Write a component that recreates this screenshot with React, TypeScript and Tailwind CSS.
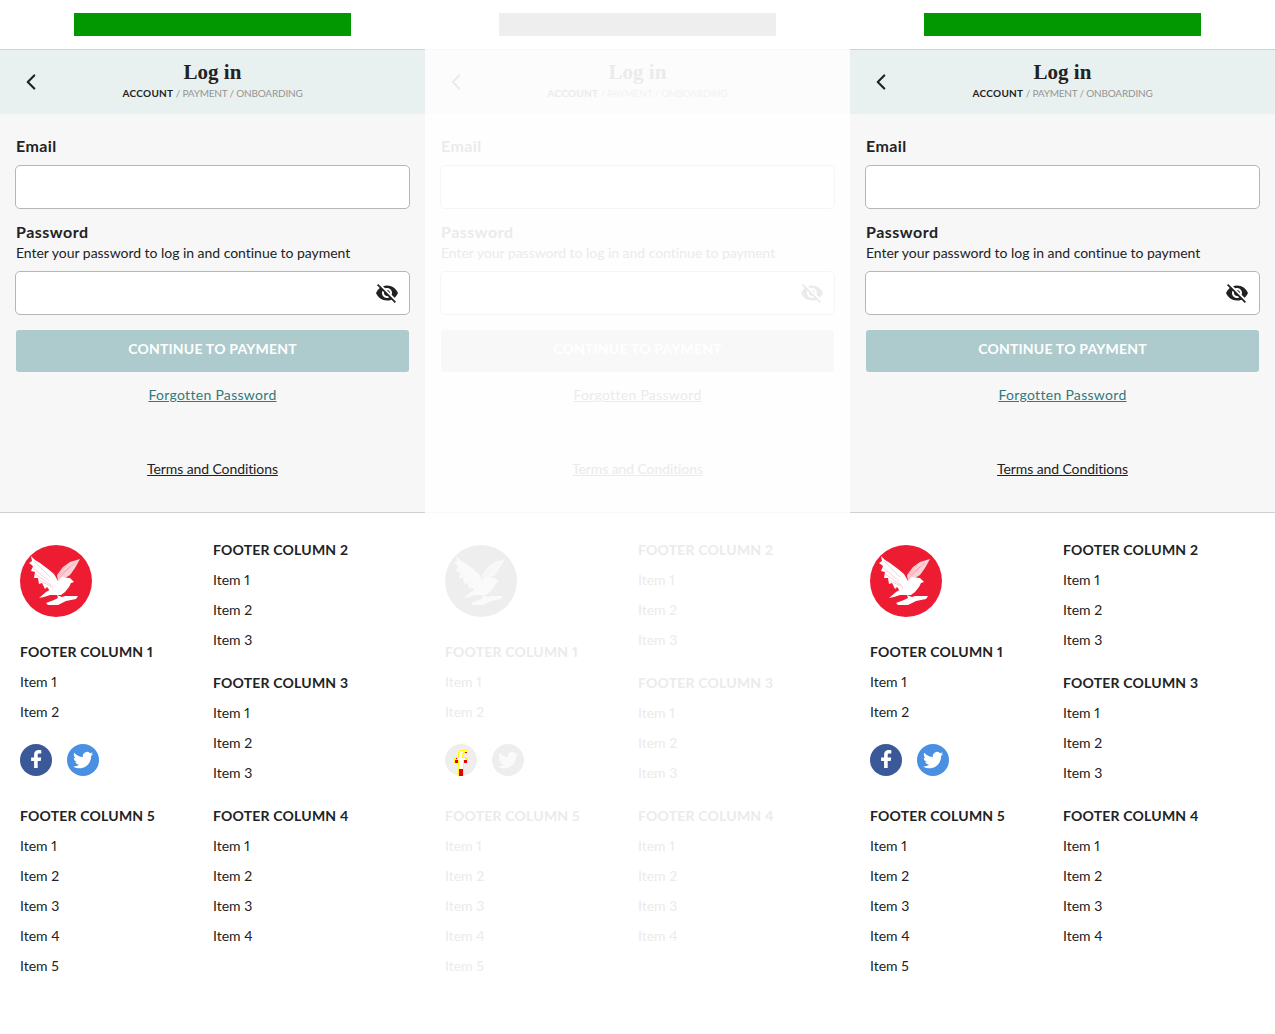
import { ChevronLeft } from "lucide-react";
import { MdVisibilityOff } from "react-icons/md";

type Theme = {
  page: string;
  ad: string;
  topBorder: string;
  header: string;
  title: string;
  crumbStrong: string;
  crumb: string;
  body: string;
  label: string;
  input: string;
  eye: string;
  button: string;
  buttonText: string;
  forgot: string;
  terms: string;
  bottomBorder: string;
  heading: string;
  item: string;
  logo: string;
  eagle: string;
  fb: string;
  tw: string;
};

const solid: Theme = {
  page: "bg-white",
  ad: "bg-[#029802]",
  topBorder: "border-[#d0d2d2]",
  header: "bg-[#e9f1f0]",
  title: "text-[#222222]",
  crumbStrong: "text-[#222222]",
  crumb: "text-[#949494]",
  body: "bg-[#f7f7f7]",
  label: "text-[#222222]",
  input: "border-[#b5b5b5] bg-white",
  eye: "text-[#222222]",
  button: "bg-[#adcbcc]",
  buttonText: "text-white",
  forgot: "text-[#2f7a7d]",
  terms: "text-[#222222]",
  bottomBorder: "border-[#d0d2d2]",
  heading: "text-[#222222]",
  item: "text-[#222222]",
  logo: "#ed1c33",
  eagle: "#ffffff",
  fb: "#3b5998",
  tw: "#4a90e2",
};

const faded: Theme = {
  page: "bg-white",
  ad: "bg-[#eeeeee]",
  topBorder: "border-[#f8f8f8]",
  header: "bg-[#fcfcfc]",
  title: "text-[#ebebeb]",
  crumbStrong: "text-[#ebebeb]",
  crumb: "text-[#f2f2f2]",
  body: "bg-[#fefefe]",
  label: "text-[#ebebeb]",
  input: "border-[#f6f6f6] bg-white",
  eye: "text-[#ebebeb]",
  button: "bg-[#f8f8f8]",
  buttonText: "text-white",
  forgot: "text-[#ebebeb]",
  terms: "text-[#ebebeb]",
  bottomBorder: "border-[#f8f8f8]",
  heading: "text-[#ebebeb]",
  item: "text-[#ebebeb]",
  logo: "#eeeeee",
  eagle: "#fafafa",
  fb: "#eeeeee",
  tw: "#eeeeee",
};

function Eagle({ bg, fg }: { bg: string; fg: string }) {
  return (
    <svg width="72" height="72" viewBox="0 0 72 72">
      <circle cx="36" cy="36" r="36" fill={bg} />
      {/* left wing */}
      <path
        fill={fg}
        d="M11 11 L15 15 L20 18 L28 24 L34 29 L38 36 L39 44 L33 43 L30 46 L27 42 L25 44 L22 38 L19 39 L18 33 L14 33 L15 27 L11 26 L13 21 L9 18 L12 16 Z"
      />
      {/* right wing */}
      <path fill={fg} fillOpacity="0.8" d="M60 14 L50 17 L43 22 L37 30 L38 36 L45 33 L50 30 L55 23 Z" />
      {/* body and tail */}
      <path
        fill={fg}
        d="M38 36 L42 32 L50 33 L54 37 L51 38 L49 42 L45 47 L41 50 L36 50 L30 50 L24 52 L19 53 L26 47 L33 43 Z"
      />
      {/* perch */}
      <path fill={fg} d="M37 50 L42 52 L45 51 L58 51 L56 54 L46 56 L38 60 L28 60 L26 58 L34 55 L38 53 Z" />
      {/* feather lines */}
      <g stroke={bg} strokeWidth="0.5" fill="none" strokeOpacity="0.4">
        <path d="M14 16 L30 32 M12 22 L29 36 M15 29 L31 40 M20 36 L33 42" />
        <path d="M55 18 L40 30 M50 22 L39 33 M47 20 L37 31" />
      </g>
    </svg>
  );
}

function Facebook({ bg, fg }: { bg: string; fg: string }) {
  return (
    <svg width="32" height="32" viewBox="0 0 32 32">
      <circle cx="16" cy="16" r="16" fill={bg} />
      <path
        fill={fg}
        d="M17.7 24v-7h3l.5-3.6h-3.5v-2.2c0-1 .3-1.7 1.8-1.7h1.8V6.3c-.4 0-1.5-.2-2.7-.2-2.7 0-4.5 1.6-4.5 4.6v2.7h-3V17h3v7z"
      />
    </svg>
  );
}

function Twitter({ bg, fg }: { bg: string; fg: string }) {
  return (
    <svg width="32" height="32" viewBox="0 0 32 32">
      <circle cx="16" cy="16" r="16" fill={bg} />
      <g transform="translate(6 6) scale(0.84)">
        <path
          fill={fg}
          d="M23.95 4.57a10 10 0 0 1-2.82.77 4.96 4.96 0 0 0 2.16-2.72c-.95.55-2 .95-3.13 1.18a4.92 4.92 0 0 0-8.38 4.48C7.69 8.1 4.07 6.13 1.64 3.16a4.82 4.82 0 0 0-.66 2.47c0 1.71.87 3.21 2.19 4.1a4.9 4.9 0 0 1-2.23-.61v.06a4.92 4.92 0 0 0 3.95 4.83c-.72.2-1.49.22-2.22.08a4.94 4.94 0 0 0 4.6 3.42A9.87 9.87 0 0 1 0 19.54a14 14 0 0 0 7.56 2.21c9.05 0 14-7.5 14-13.98 0-.21 0-.42-.02-.63a9.94 9.94 0 0 0 2.41-2.57z"
        />
      </g>
    </svg>
  );
}

function FooterColumn({ title, items, t }: { title: string; items: string[]; t: Theme }) {
  return (
    <div>
      <h3 className={`text-[14px] leading-[20px] font-bold tracking-[0.2px] ${t.heading}`}>{title}</h3>
      <ul className="mt-[5px]">
        {items.map((item) => (
          <li key={item} className={`h-[30px] text-[14px] leading-[30px] ${t.item}`}>
            {item}
          </li>
        ))}
      </ul>
    </div>
  );
}

function Panel({ t, glitch }: { t: Theme; glitch?: boolean }) {
  return (
    <div className={`w-[425px] shrink-0 ${t.page}`}>
      <div className="flex h-[49px] justify-center pt-[13px]">
        <div className={`h-[23px] w-[277px] ${t.ad}`} />
      </div>

      {/* Page header */}
      <div className={`relative h-[65px] border-t ${t.topBorder} ${t.header}`}>
        <ChevronLeft className={`absolute left-[18px] top-[19px] h-[26px] w-[26px] ${t.title}`} strokeWidth={2} />
        <div className="flex flex-col items-center pt-[9px]">
          <h1 className={`font-['Liberation_Serif',serif] text-[21px] leading-[26px] font-bold ${t.title}`}>Log in</h1>
          <div className={`mt-[1px] text-[10px] leading-[14px] tracking-[-0.2px] ${t.crumb}`}>
            <span className={`font-bold tracking-[0.3px] ${t.crumbStrong}`}>ACCOUNT</span> / PAYMENT / ONBOARDING
          </div>
        </div>
      </div>

      {/* Form */}
      <div className={`h-[399px] border-b px-[16px] pt-[22px] ${t.body} ${t.bottomBorder}`}>
        <label className={`block text-[16px] leading-[20px] font-bold tracking-[0.4px] ${t.label}`}>Email</label>
        <div className={`-mx-px mt-[9px] h-[44px] rounded-[5px] border ${t.input}`} />
        <label className={`mt-[13px] block text-[16px] leading-[20px] font-bold tracking-[0.5px] ${t.label}`}>
          Password
        </label>
        <p className={`mt-[1px] text-[14px] leading-[20px] tracking-[-0.03px] ${t.label}`}>
          Enter your password to log in and continue to payment
        </p>
        <div className={`-mx-px mt-[8px] flex h-[44px] items-center justify-end rounded-[5px] border pr-[10px] ${t.input}`}>
          <MdVisibilityOff className={`h-[24px] w-[24px] ${t.eye}`} />
        </div>
        <button
          className={`mt-[15px] flex h-[42px] w-full justify-center rounded-[3px] pt-[9px] text-[14px] leading-[20px] font-bold tracking-[0.2px] ${t.button} ${t.buttonText}`}
        >
          CONTINUE TO PAYMENT
        </button>
        <div className="mt-[12px] text-center leading-[20px]">
          <a className={`text-[14px] leading-[20px] tracking-[0.3px] underline ${t.forgot}`}>Forgotten Password</a>
        </div>
        <div className="mt-[53px] text-center leading-[20px]">
          <a className={`text-[14px] leading-[20px] tracking-[-0.1px] underline ${t.terms}`}>Terms and Conditions</a>
        </div>
      </div>

      {/* Footer */}
      <div className="grid h-[521px] grid-cols-[193px_1fr] pl-[20px] pt-[27px]">
        <div>
          <div className="mt-[5px]">
            <Eagle bg={t.logo} fg={t.eagle} />
          </div>
          <div className="mt-[25px]">
            <FooterColumn title="FOOTER COLUMN 1" items={["Item 1", "Item 2"]} t={t} />
          </div>
          <div className="relative mt-[17px] flex h-[32px] gap-[15px]">
            <Facebook bg={t.fb} fg={glitch ? t.fb : "#ffffff"} />
            <Twitter bg={t.tw} fg={glitch ? "#fafafa" : "#ffffff"} />
            {glitch && (
              <svg className="absolute left-[9px] top-[6px]" width="14" height="26" viewBox="0 0 14 26" shapeRendering="crispEdges">
                <path fill="#ffff00" d="M6 0h7v3h-2v1H9v3h3v1h2v5h-4v13H4V13H0V8h2V7h2V2h2z" />
                <path fill="#ffffff" d="M7 1h5v1H9v1H8v5h3v2H9v9H5V10H3V8h2V3h1V2h1z" />
                <path fill="#e60000" d="M1 10h3v3H1zM10 10h3v3h-3zM2 8h1v1H2zM11 2h2v1h-2zM5 19h4v7H5z" />
              </svg>
            )}
          </div>
          <div className="mt-[30px]">
            <FooterColumn title="FOOTER COLUMN 5" items={["Item 1", "Item 2", "Item 3", "Item 4", "Item 5"]} t={t} />
          </div>
        </div>
        <div className="flex flex-col">
          <FooterColumn title="FOOTER COLUMN 2" items={["Item 1", "Item 2", "Item 3"]} t={t} />
          <div className="mt-[18px]">
            <FooterColumn title="FOOTER COLUMN 3" items={["Item 1", "Item 2", "Item 3"]} t={t} />
          </div>
          <div className="mt-[18px]">
            <FooterColumn title="FOOTER COLUMN 4" items={["Item 1", "Item 2", "Item 3", "Item 4"]} t={t} />
          </div>
        </div>
      </div>
    </div>
  );
}

export default function App() {
  return (
    <div className="flex h-[1034px] w-[1275px] overflow-hidden bg-white font-['Lato',sans-serif] proportional-nums">
      <Panel t={solid} />
      <Panel t={faded} glitch />
      <Panel t={solid} />
    </div>
  );
}
